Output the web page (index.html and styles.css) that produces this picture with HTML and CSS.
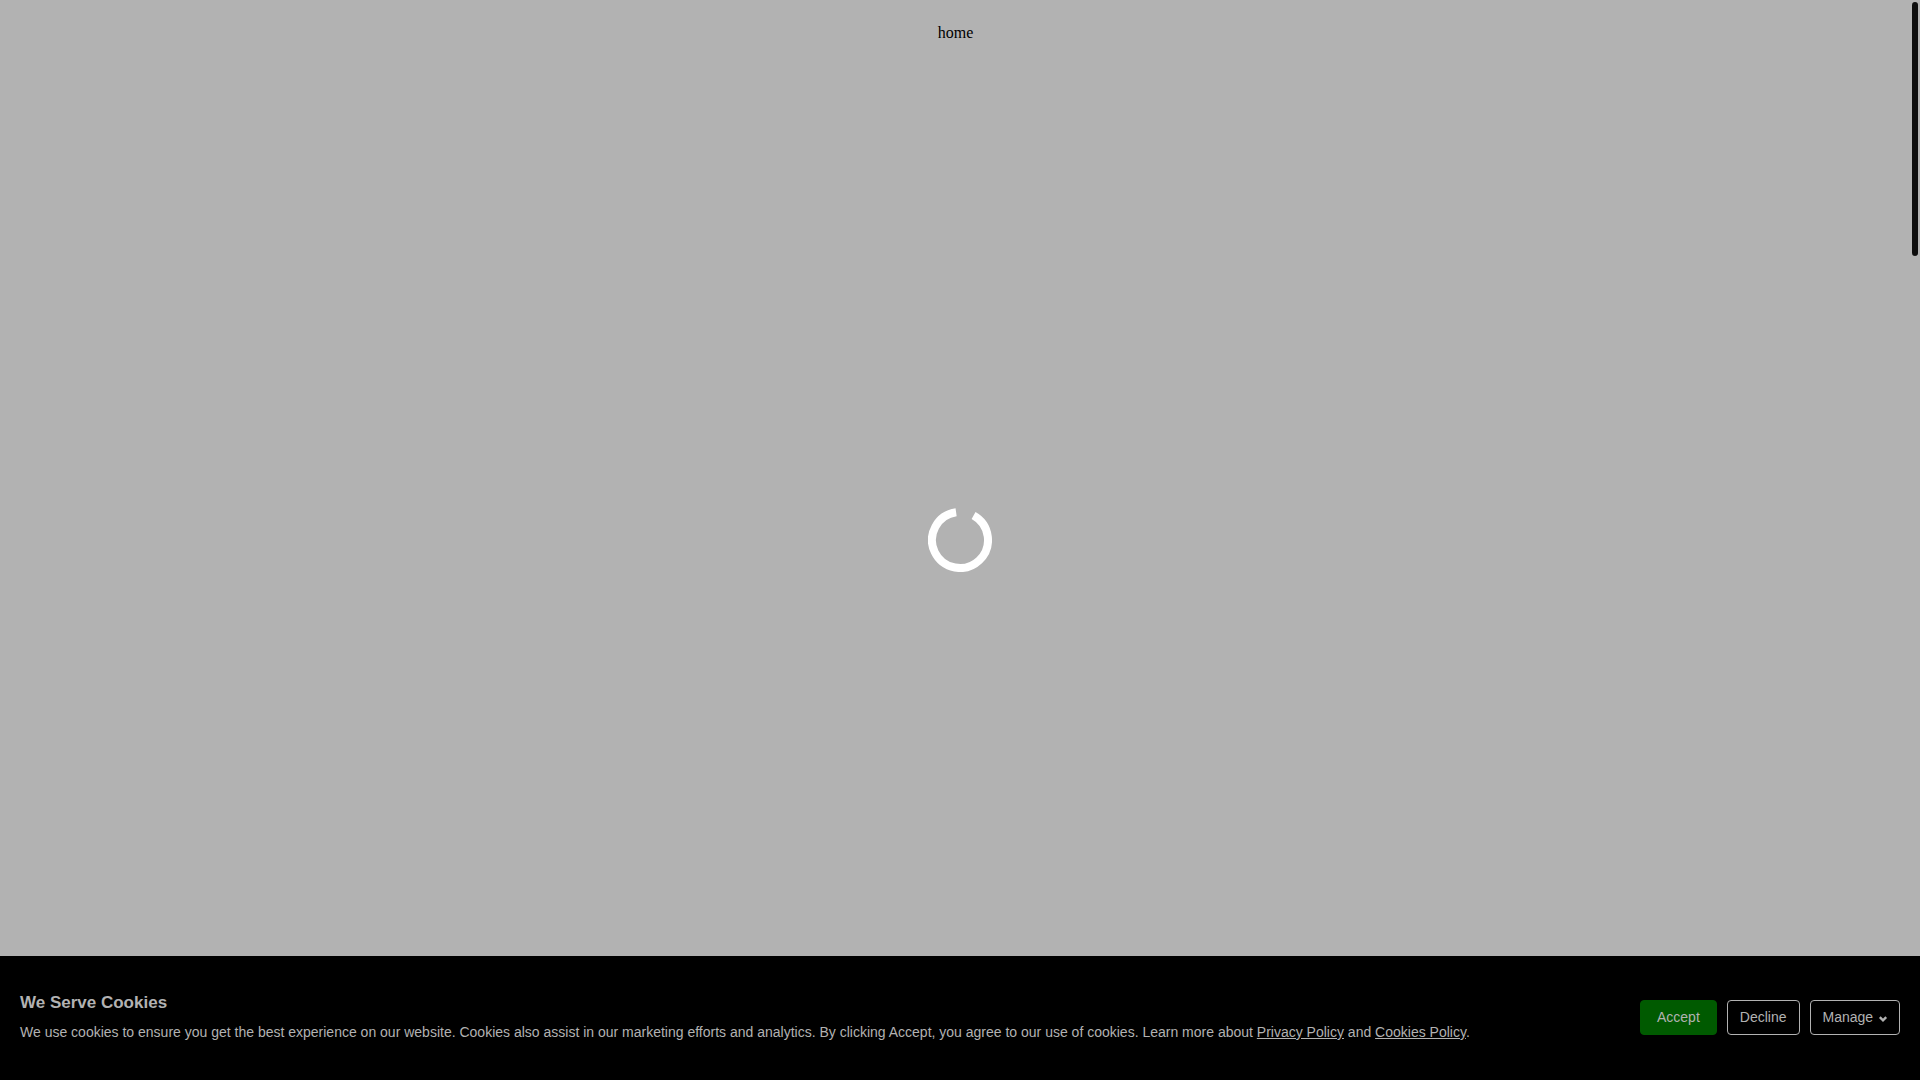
FILE: index.html
```html
<!DOCTYPE html>
<html lang="en">
<head>
    <meta charset="UTF-8">
    <meta name="viewport" content="width=device-width, initial-scale=1.0">
    <title>Home</title>
    <link rel="stylesheet" href="styles.css">
</head>
<body>
    <main class="page">
        <p class="page-title">home</p>
    </main>

    <!-- Cookie banner -->
    <section class="cookie-bar">
        <div class="cookie-text">
            <h2>We Serve Cookies</h2>
            <p>We use cookies to ensure you get the best experience on our website. Cookies also assist in our marketing efforts and analytics. By clicking Accept, you agree to our use of cookies. Learn more about <a href="#privacy">Privacy Policy</a> and <a href="#cookies">Cookies Policy</a>.</p>
        </div>
        <div class="cookie-buttons">
            <button type="button" class="btn btn-accept">Accept</button>
            <button type="button" class="btn">Decline</button>
            <button type="button" class="btn">Manage
                <svg class="chevron" viewBox="0 0 8 6" aria-hidden="true"><path d="M0.8 1.2 L4 4.4 L7.2 1.2"/></svg>
            </button>
        </div>
    </section>

    <!-- Loader -->
    <div class="loader">
        <svg viewBox="0 0 64 64" role="img" aria-label="Loading">
            <path d="M45.57 7.51 A28 28 0 1 1 28.1 4.27"/>
        </svg>
    </div>

    <div class="scroll-thumb"></div>
</body>
</html>
```

FILE: styles.css
```css
* {
    box-sizing: border-box;
}

body {
    margin: 0;
    min-height: 100vh;
    display: flex;
    flex-direction: column;
    background-color: #b2b2b2;
    color: #000;
    font-family: "Times New Roman", "Liberation Serif", serif;
    font-size: 16px;
    overflow: hidden;
}

.page {
    flex: 1;
    padding: 8px 9px 0 0;
    text-align: center;
}

.page-title {
    margin: 16px 0;
    line-height: 18px;
}

/* Cookie banner */
.cookie-bar {
    display: flex;
    align-items: center;
    justify-content: space-between;
    gap: 20px;
    padding: 37px 20px 38px;
    background-color: #000;
    color: #b2b2b2;
    font-family: Helvetica, Arial, "Liberation Sans", sans-serif;
    font-size: 14px;
    text-rendering: optimizeSpeed;
}

.cookie-text h2 {
    margin: 0 0 9px;
    font-size: 17px;
    line-height: 20px;
}

.cookie-text p {
    margin: 0;
    line-height: 20px;
}

.cookie-text a {
    color: inherit;
}

.cookie-buttons {
    display: flex;
    flex-shrink: 0;
    gap: 10px;
}

.btn {
    padding: 0 12px;
    border: 1px solid #b2b2b2;
    border-radius: 4px;
    background-color: #000;
    color: #b2b2b2;
    font: inherit;
    line-height: 33px;
    cursor: pointer;
}

.btn-accept {
    padding: 0 16px;
    border-color: #005a00;
    background-color: #005a00;
}

.chevron {
    width: 8px;
    height: 6px;
    margin-left: 2px;
    overflow: visible;
    fill: none;
    stroke: #b2b2b2;
    stroke-width: 2.4;
}

/* Loader */
.loader {
    position: fixed;
    inset: 0;
    display: flex;
    align-items: center;
    justify-content: center;
    pointer-events: none;
}

.loader svg {
    width: 64px;
    height: 64px;
    fill: none;
    stroke: #fff;
    stroke-width: 8;
}

/* Scrollbar */
.scroll-thumb {
    position: fixed;
    top: 2px;
    right: 2px;
    width: 6px;
    height: 254px;
    border-radius: 3px;
    background-color: #0d0d0d;
}
```
